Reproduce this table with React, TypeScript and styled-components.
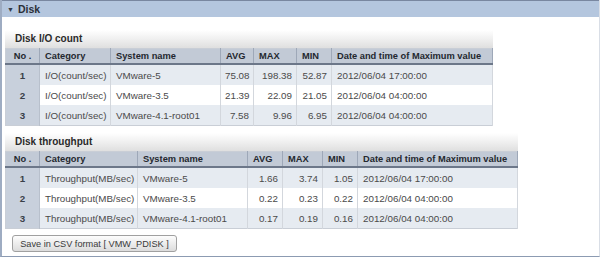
import React from "react";
import styled, { createGlobalStyle } from "styled-components";

// Types
type Row = {
  no: number;
  category: string;
  system: string;
  avg: string;
  max: string;
  min: string;
  date: string;
};

type Section = {
  title: string;
  cols: number[];
  rows: Row[];
};

// Data
const Sections: Section[] = [
  {
    title: "Disk I/O count",
    cols: [34, 71, 110, 33, 43, 35, 161],
    rows: [
      { no: 1, category: "I/O(count/sec)", system: "VMware-5", avg: "75.08", max: "198.38", min: "52.87", date: "2012/06/04 17:00:00" },
      { no: 2, category: "I/O(count/sec)", system: "VMware-3.5", avg: "21.39", max: "22.09", min: "21.05", date: "2012/06/04 04:00:00" },
      { no: 3, category: "I/O(count/sec)", system: "VMware-4.1-root01", avg: "7.58", max: "9.96", min: "6.95", date: "2012/06/04 04:00:00" },
    ],
  },
  {
    title: "Disk throughput",
    cols: [34, 98, 110, 35, 40, 35, 160],
    rows: [
      { no: 1, category: "Throughput(MB/sec)", system: "VMware-5", avg: "1.66", max: "3.74", min: "1.05", date: "2012/06/04 17:00:00" },
      { no: 2, category: "Throughput(MB/sec)", system: "VMware-3.5", avg: "0.22", max: "0.23", min: "0.22", date: "2012/06/04 04:00:00" },
      { no: 3, category: "Throughput(MB/sec)", system: "VMware-4.1-root01", avg: "0.17", max: "0.19", min: "0.16", date: "2012/06/04 04:00:00" },
    ],
  },
];

const Headers = ["No .", "Category", "System name", "AVG", "MAX", "MIN", "Date and time of Maximum value"];

// Styled Components
const GlobalStyle = createGlobalStyle`
  body {
    margin: 0;
    background: #ffffff;
    font-family: "Liberation Sans", Arial, Helvetica, sans-serif;
  }
`;

const Panel = styled.div`
  width: 600px;
  height: 257px;
  box-sizing: border-box;
  background: #ffffff;
  border-left: 2px solid #9eacc2;
  border-right: 1px solid #d9dee6;
  border-bottom: 1px solid #8c9bb2;
  display: flex;
  flex-direction: column;
`;

const PanelHeader = styled.div`
  height: 16px;
  border-top: 1px solid #7987a0;
  background: #b4c6de;
  display: flex;
  align-items: center;
  gap: 4px;
  padding-left: 5px;
  font-size: 10.5px;
  font-weight: bold;
  color: #2a2f38;
`;

const Arrow = styled.span`
  font-size: 7px;
  color: #333a46;
`;

const PanelBody = styled.div`
  padding: 13px 0 0 3px;
  display: flex;
  flex-direction: column;
  align-items: flex-start;
`;

const Block = styled.div<{ $gap: number }>`
  display: flex;
  flex-direction: column;
  margin-bottom: ${({ $gap }) => $gap}px;
`;

const BlockTitle = styled.div`
  height: 18px;
  line-height: 18px;
  padding-left: 10px;
  background: linear-gradient(to bottom, #ffffff 0%, #f1f1f1 45%, #dfdfdf 100%);
  font-size: 10px;
  font-weight: bold;
  color: #2a2a2a;
`;

const Table = styled.table<{ $w: number }>`
  width: ${({ $w }) => $w}px;
  table-layout: fixed;
  border-collapse: collapse;
  border: 1px solid #c9ced6;
  font-size: 9.8px;
`;

const Th = styled.th`
  height: 14px;
  padding: 0 5px;
  text-align: left;
  font-size: 9.3px;
  font-weight: bold;
  color: #24282f;
  background: #c2cad6;
  border-right: 1px solid #9ea8b8;
  border-bottom: 2px solid #6c7789;
  white-space: nowrap;
  overflow: hidden;

  &:first-child {
    text-align: center;
  }
`;

const Tr = styled.tr<{ $alt: boolean }>`
  background: ${({ $alt }) => ($alt ? "#e6ebf1" : "#ffffff")};
`;

const Td = styled.td<{ $num?: boolean }>`
  height: 20px;
  padding: 0 ${({ $num }) => ($num ? "4px" : "5px")};
  text-align: ${({ $num }) => ($num ? "right" : "left")};
  color: #4a4a4a;
  border-right: 1px solid #d3d7dd;
  white-space: nowrap;
  overflow: hidden;
`;

const NoCell = styled.td`
  height: 20px;
  padding: 0;
  text-align: center;
  font-weight: bold;
  color: #3a3f48;
  background: #c8d0dc;
  border-right: 1px solid #b8c0cc;
`;

const SaveButton = styled.button`
  box-sizing: border-box;
  margin: 2px 0 0 7px;
  width: 165px;
  height: 17px;
  padding: 0 6px;
  text-align: center;
  border: 1px solid #a0a0a0;
  border-radius: 3px;
  background: linear-gradient(to bottom, #fdfdfd, #dcdcdc);
  font-family: "Liberation Sans", Arial, sans-serif;
  font-size: 9.2px;
  color: #3a3a3a;
  white-space: nowrap;
`;

const App: React.FC = () => {
  return (
    <>
      <GlobalStyle />
      <Panel>
        <PanelHeader>
          <Arrow>▼</Arrow>
          <span>Disk</span>
        </PanelHeader>
        <PanelBody>
          {Sections.map((section, i) => (
            <Block key={section.title} $gap={i === 0 ? 7 : 4}>
              <BlockTitle>{section.title}</BlockTitle>
              <Table $w={section.cols.reduce((a, b) => a + b, 0)}>
                <colgroup>
                  {section.cols.map((w, c) => (
                    <col key={c} style={{ width: w }} />
                  ))}
                </colgroup>
                <thead>
                  <tr>
                    {Headers.map((h) => (
                      <Th key={h}>{h}</Th>
                    ))}
                  </tr>
                </thead>
                <tbody>
                  {section.rows.map((row) => (
                    <Tr key={row.no} $alt={row.no % 2 === 1}>
                      <NoCell>{row.no}</NoCell>
                      <Td>{row.category}</Td>
                      <Td>{row.system}</Td>
                      <Td $num>{row.avg}</Td>
                      <Td $num>{row.max}</Td>
                      <Td $num>{row.min}</Td>
                      <Td>{row.date}</Td>
                    </Tr>
                  ))}
                </tbody>
              </Table>
            </Block>
          ))}
          <SaveButton>Save in CSV format [ VMW_PDISK ]</SaveButton>
        </PanelBody>
      </Panel>
    </>
  );
};

export default App;
